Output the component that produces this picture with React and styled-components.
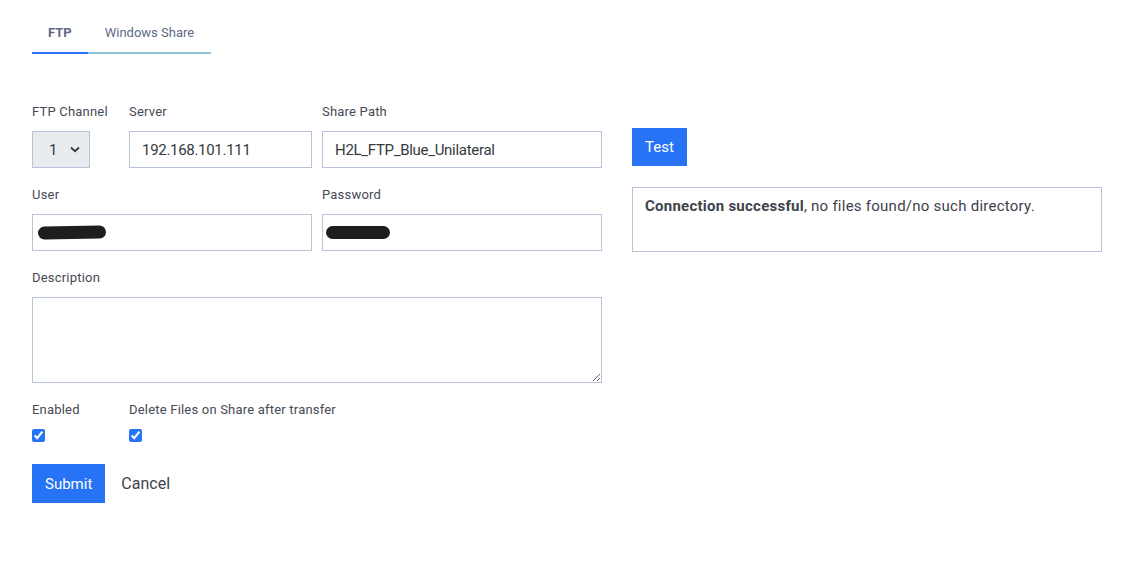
import React from "react";
import styled, { createGlobalStyle } from "styled-components";

const Global = createGlobalStyle`
  html, body { margin: 0; padding: 0; background: #fff; }
  body { font-family: Roboto, "Liberation Sans", sans-serif; color: #3d424c; }
  * { box-sizing: border-box; }
`;

const Page = styled.div`
  padding: 15px 32px 40px;
`;

const TabNav = styled.div`
  display: flex;
  margin-bottom: 49px;
`;

const Tab = styled.div`
  padding: 9px ${(p) => (p.$active ? 16 : 17)}px 10px;
  font-size: 13px;
  line-height: 18px;
  color: #5e6a86;
  font-weight: ${(p) => (p.$active ? 700 : 400)};
  border-bottom: 2px solid ${(p) => (p.$active ? "#2673f5" : "#8cc4dc")};
`;

const Layout = styled.div`
  display: flex;
  gap: 30px;
  align-items: flex-start;
`;

const Form = styled.div`
  width: 570px;
  display: flex;
  flex-direction: column;
`;

const Row = styled.div`
  display: grid;
  grid-template-columns: ${(p) => p.$cols};
  column-gap: 10px;
  margin-bottom: 18px;
`;

const Group = styled.div`
  display: flex;
  flex-direction: column;
  align-items: flex-start;
`;

const Label = styled.label`
  font-size: 13px;
  line-height: 16px;
  letter-spacing: 0.2px;
  padding-top: 1px;
  margin-bottom: 11px;
  color: #454a55;
`;

const Input = styled.input`
  width: 100%;
  height: 37px;
  border: 1px solid #b8c3da;
  padding: 0 12px;
  font-family: inherit;
  font-size: 15px;
  letter-spacing: -0.3px;
  color: #343a40;
  outline: none;
  background: #fff;
`;

const SelectBox = styled.div`
  width: 58px;
  height: 37px;
  border: 1px solid #b8c3da;
  background: #e9ecef;
  display: flex;
  align-items: center;
  justify-content: space-between;
  padding: 0 9px 0 16px;
  font-size: 15px;
  color: #343a40;
`;

const TextArea = styled.textarea`
  width: 100%;
  height: 86px;
  border: 1px solid #b8c3da;
  font-family: inherit;
  font-size: 15px;
  padding: 8px 12px;
  outline: none;
  resize: vertical;
  display: block;
`;

const Check = styled.input.attrs({ type: "checkbox" })`
  width: 13px;
  height: 13px;
  margin: 0;
  accent-color: #2673f5;
`;

const Actions = styled.div`
  display: flex;
  align-items: center;
  gap: 16px;
  margin-top: 4px;
`;

const PrimaryButton = styled.button`
  background: #2673f5;
  color: #fff;
  border: none;
  font-family: inherit;
  font-size: 15px;
  height: ${(p) => p.$h}px;
  padding: 0 ${(p) => p.$px}px;
  cursor: pointer;
`;

const LinkButton = styled.button`
  background: none;
  border: none;
  padding: 0;
  font-family: inherit;
  font-size: 16px;
  color: #3d424c;
  cursor: pointer;
`;

const Side = styled.div`
  width: 470px;
  padding-top: 25px;
  display: flex;
  flex-direction: column;
  align-items: flex-start;
  gap: 21px;
`;

const Result = styled.div`
  width: 100%;
  height: 65px;
  border: 1px solid #b8c3da;
  padding: 9px 12px;
  font-size: 15px;
  line-height: 18px;
  letter-spacing: 0.25px;
  color: #3d424c;
  b { font-weight: 700; }
`;

const Redact = styled.span`
  display: inline-block;
  width: ${(p) => p.$w}px;
  height: 13px;
  border-radius: 7px;
  background: #1e1e1e;
  transform: rotate(${(p) => p.$r}deg);
`;

const MaskedInput = styled.div`
  width: 100%;
  height: 37px;
  border: 1px solid #b8c3da;
  display: flex;
  align-items: center;
  padding: 0 ${(p) => p.$pl}px;
`;

const Chevron = () => (
  <svg width="10" height="7" viewBox="0 0 10 7">
    <path d="M1 1.5 L5 5.2 L9 1.5" fill="none" stroke="#343a40" strokeWidth="1.8" />
  </svg>
);

export default function App() {
  return (
    <>
      <Global />
      <Page>
        <TabNav>
          <Tab $active>FTP</Tab>
          <Tab>Windows Share</Tab>
        </TabNav>
        <Layout>
          <Form>
            <Row $cols="87px 183px 280px">
              <Group>
                <Label>FTP Channel</Label>
                <SelectBox>
                  <span>1</span>
                  <Chevron />
                </SelectBox>
              </Group>
              <Group>
                <Label>Server</Label>
                <Input defaultValue="192.168.101.111" />
              </Group>
              <Group>
                <Label>Share Path</Label>
                <Input defaultValue="H2L_FTP_Blue_Unilateral" />
              </Group>
            </Row>
            <Row $cols="280px 280px">
              <Group>
                <Label>User</Label>
                <MaskedInput $pl={5}>
                  <Redact $w={68} $r={-1} />
                </MaskedInput>
              </Group>
              <Group>
                <Label>Password</Label>
                <MaskedInput $pl={3}>
                  <Redact $w={64} $r={0} />
                </MaskedInput>
              </Group>
            </Row>
            <Row $cols="570px">
              <Group>
                <Label>Description</Label>
                <TextArea />
              </Group>
            </Row>
            <Row $cols="87px 300px">
              <Group>
                <Label>Enabled</Label>
                <Check defaultChecked />
              </Group>
              <Group>
                <Label>Delete Files on Share after transfer</Label>
                <Check defaultChecked />
              </Group>
            </Row>
            <Actions>
              <PrimaryButton $h={39} $px={13}>Submit</PrimaryButton>
              <LinkButton>Cancel</LinkButton>
            </Actions>
          </Form>
          <Side>
            <PrimaryButton $h={38} $px={13}>Test</PrimaryButton>
            <Result>
              <b>Connection successful</b>, no files found/no such directory.
            </Result>
          </Side>
        </Layout>
      </Page>
    </>
  );
}
